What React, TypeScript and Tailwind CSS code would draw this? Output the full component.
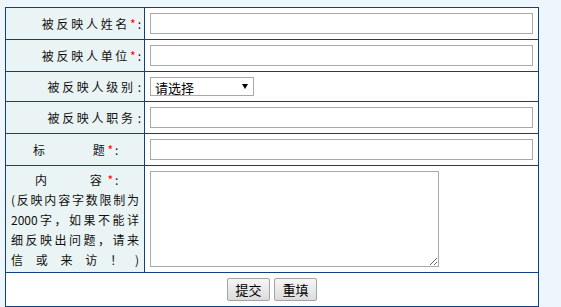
import React from "react";

const line = "border-[#11427f]";

function Label({ text, req }: { text: string; req?: boolean }) {
  return (
    <div className={`w-[139px] shrink-0 border-r ${line} bg-[#ebf4f4] flex items-center justify-end pr-[3px] text-[12px] text-[#111]`}>
      <span className="tracking-[2.7px]">{text}</span>
      {req && <span className="text-[#ff0000]">*</span>}
      <span className="ml-[2px]">:</span>
    </div>
  );
}

function TextRow({ label, req }: { label: string; req?: boolean }) {
  return (
    <div className={`flex h-[32px] border-b ${line}`}>
      <Label text={label} req={req} />
      <div className={`flex-1 flex items-center pl-[5px] border-r ${line} bg-white`}>
        <input type="text" className="w-[383px] h-[21px] border border-[#a9a9a9] bg-white outline-none" />
      </div>
    </div>
  );
}

const notice = ["(反映内容字数限制为", "2000字，如果不能详", "细反映出问题，请来", "信或来访！)"];

export default function App() {
  return (
    <div className="w-[561px] h-[307px] bg-[#edf5fd] pt-[7px] pl-[5px] font-['Noto_Sans_CJK_SC','Noto_Sans',sans-serif]">
      <div className={`w-[534px] border-t border-l ${line}`}>
        <TextRow label="被反映人姓名" req />
        <TextRow label="被反映人单位" req />

        <div className={`flex h-[30px] border-b ${line}`}>
          <Label text="被反映人级别" />
          <div className={`flex-1 flex items-center pl-[5px] border-r ${line} bg-white`}>
            <div className="relative w-[104px] h-[19px] border border-[#a9a9a9] bg-white flex items-center pl-[4px] pt-[2px] text-[13px] leading-[15px] text-black">
              请选择
              <svg className="absolute right-[5px] top-[6px]" width="6" height="5" viewBox="0 0 6 5">
                <polygon points="0,0 6,0 3,5" fill="#000" />
              </svg>
            </div>
          </div>
        </div>

        <TextRow label="被反映人职务" />

        <div className={`flex h-[32px] border-b ${line}`}>
          <div className={`w-[139px] shrink-0 border-r ${line} bg-[#ebf4f4] flex items-center pl-[27px] text-[12px] text-[#111]`}>
            <span className="tracking-[2.7px]">标</span>
            <span className="inline-block w-[45px]" />
            <span className="tracking-[2.7px]">题</span>
            <span className="text-[#ff0000]">*</span>
            <span className="ml-[2px]">:</span>
          </div>
          <div className={`flex-1 flex items-center pl-[5px] border-r ${line} bg-white`}>
            <input type="text" className="w-[383px] h-[21px] border border-[#a9a9a9] bg-white outline-none" />
          </div>
        </div>

        <div className={`flex h-[107px] border-b ${line}`}>
          <div className={`w-[139px] shrink-0 border-r ${line} bg-[#ebf4f4] flex flex-col justify-center px-[5px] pt-[1px] text-[12px] leading-[20px] text-[#111]`}>
            <div className="flex pl-[24px]">
              <span className="tracking-[2.7px]">内</span>
              <span className="inline-block w-[40px]" />
              <span className="tracking-[2.7px]">容</span>
              <span className="ml-[3px] text-[#ff0000]">*</span>
              <span className="ml-[2px]">:</span>
            </div>
            {notice.map((t) => (
              <div key={t} className="text-justify [text-align-last:justify]">
                {t}
              </div>
            ))}
          </div>
          <div className={`flex-1 flex items-center pl-[5px] border-r ${line} bg-white`}>
            <textarea className="w-[289px] h-[96px] border border-[#a9a9a9] bg-white resize outline-none" />
          </div>
        </div>

        <div className={`flex h-[34px] items-center justify-center gap-[4px] border-b border-r ${line} bg-white`}>
          <button className="w-[43px] h-[23px] border border-[#a3a3a3] rounded-[2px] bg-gradient-to-b from-[#f6f6f6] to-[#dcdcdc] text-[13px] text-black">
            提交
          </button>
          <button className="w-[43px] h-[23px] border border-[#a3a3a3] rounded-[2px] bg-gradient-to-b from-[#f6f6f6] to-[#dcdcdc] text-[13px] text-black">
            重填
          </button>
        </div>
      </div>
    </div>
  );
}
